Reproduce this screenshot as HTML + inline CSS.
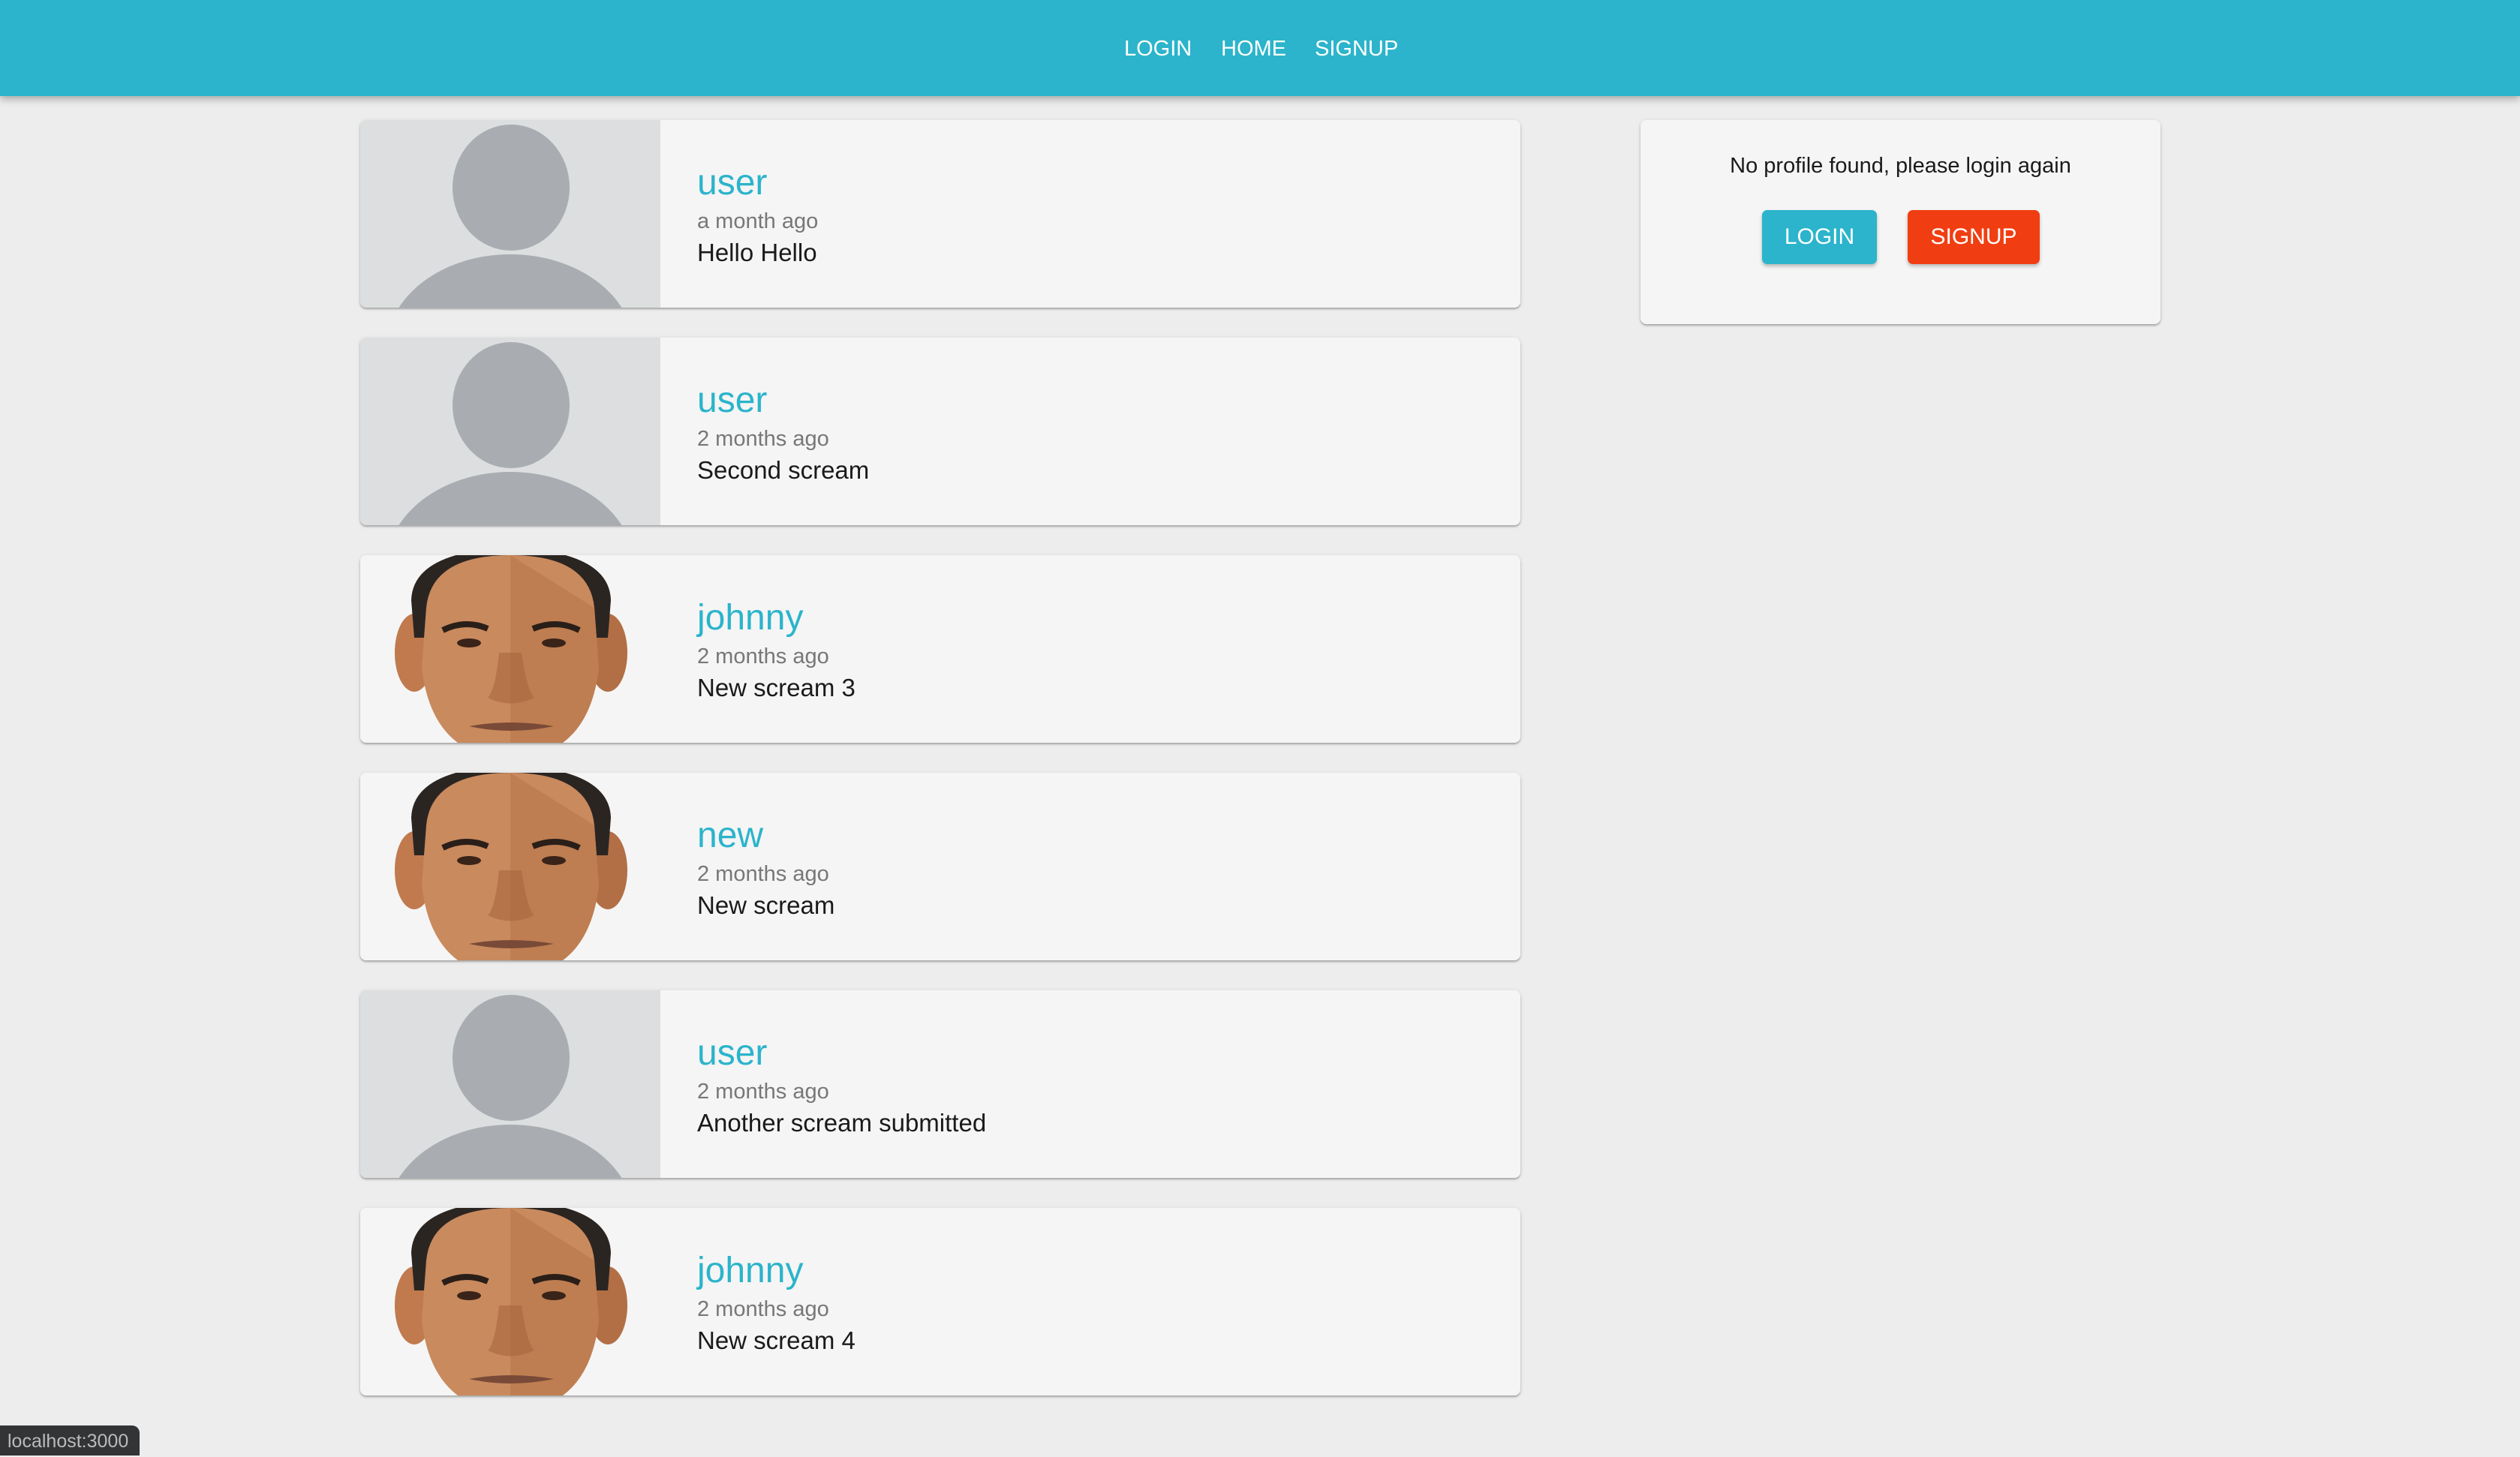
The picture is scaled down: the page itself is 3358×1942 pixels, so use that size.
<!DOCTYPE html>
<html><head><meta charset="utf-8"><style>
*{margin:0;padding:0;box-sizing:border-box}
body{width:3358px;height:1940px;background:#ededed;font-family:"Liberation Sans",Arial,sans-serif;position:relative;overflow:hidden}
.nav{position:absolute;left:0;top:0;width:3358px;height:128px;background:#2bb4cb;box-shadow:0 4px 10px rgba(0,0,0,.3);z-index:2}
.nav span{position:absolute;top:45px;color:#fff;font-size:29px;line-height:40px}
.card{position:absolute;left:480px;width:1546px;height:250px;background:#f5f5f5;border-radius:8px;box-shadow:0 2px 2px rgba(0,0,0,.25),0 1px 6px rgba(0,0,0,.1);overflow:hidden}
.card svg{position:absolute;left:0;top:0}
.t{position:absolute;left:449px;white-space:nowrap}
.n{top:59px;font-size:48px;color:#2bb4cb;line-height:50px}
.d{top:118px;font-size:29px;color:#777;line-height:34px}
.b{top:158px;font-size:33px;color:#1a1a1a;line-height:38px}
.side{position:absolute;left:2186px;top:160px;width:693px;height:272px;background:#f5f5f5;border-radius:8px;box-shadow:0 2px 2px rgba(0,0,0,.25),0 1px 6px rgba(0,0,0,.1)}
.btn{position:absolute;top:120px;height:72px;border-radius:7px;color:#fff;font-size:30px;line-height:72px;text-align:center;box-shadow:0 3px 5px rgba(0,0,0,.25)}
.tip{position:absolute;left:0;top:1900px;width:186px;height:40px;background:#333436;border-top-right-radius:10px;color:#bbb;font-size:25px;line-height:42px;padding-left:10px}
</style></head><body>
<div class="nav"><span style="left:1498px">LOGIN</span><span style="left:1627px">HOME</span><span style="left:1752px">SIGNUP</span></div>

<svg width="0" height="0" style="position:absolute"><defs>
<g id="ph"><rect width="400" height="250" fill="#dcdedf"/><ellipse cx="201" cy="90" rx="78" ry="84" fill="#a9adb1"/><ellipse cx="200" cy="305" rx="165" ry="126" fill="#a9adb1"/></g>
<g id="ob"><rect width="400" height="250" fill="#f5f5f5"/>
<ellipse cx="72" cy="130" rx="26" ry="52" fill="#c07a4e"/><ellipse cx="330" cy="130" rx="26" ry="52" fill="#b26f45"/>
<path d="M68 60 Q70 -5 200 -10 Q332 -5 334 60 L330 110 L72 110 Z" fill="#2b2522"/>
<path d="M88 70 Q95 0 200 0 Q305 0 312 70 L318 150 Q310 220 270 250 L130 250 Q90 220 82 150 Z" fill="#c98a5e"/>
<path d="M200 0 L312 70 L318 150 Q310 220 270 250 L200 250 Z" fill="#b77649" opacity=".6"/>
<path d="M110 100 Q140 85 170 98" stroke="#2a1e18" stroke-width="8" fill="none"/><path d="M230 98 Q262 85 292 100" stroke="#2a1e18" stroke-width="8" fill="none"/>
<ellipse cx="145" cy="117" rx="16" ry="6" fill="#3a2318"/><ellipse cx="258" cy="117" rx="16" ry="6" fill="#3a2318"/>
<path d="M185 130 Q180 180 170 190 Q200 205 232 190 Q222 180 215 130" fill="#a8653d" opacity=".6"/>
<path d="M145 228 Q200 218 258 228 Q200 240 145 228Z" fill="#7a4a38"/></g>
</defs></svg>

<div class="card" style="top:160px"><svg width="400" height="250"><use href="#ph"/></svg><div class="t n">user</div><div class="t d">a month ago</div><div class="t b">Hello Hello</div></div>
<div class="card" style="top:450px"><svg width="400" height="250"><use href="#ph"/></svg><div class="t n">user</div><div class="t d">2 months ago</div><div class="t b">Second scream</div></div>
<div class="card" style="top:740px"><svg width="400" height="250"><use href="#ob"/></svg><div class="t n">johnny</div><div class="t d">2 months ago</div><div class="t b">New scream 3</div></div>
<div class="card" style="top:1030px"><svg width="400" height="250"><use href="#ob"/></svg><div class="t n">new</div><div class="t d">2 months ago</div><div class="t b">New scream</div></div>
<div class="card" style="top:1320px"><svg width="400" height="250"><use href="#ph"/></svg><div class="t n">user</div><div class="t d">2 months ago</div><div class="t b">Another scream submitted</div></div>
<div class="card" style="top:1610px"><svg width="400" height="250"><use href="#ob"/></svg><div class="t n">johnny</div><div class="t d">2 months ago</div><div class="t b">New scream 4</div></div>

<div class="side">
<div style="position:absolute;left:0;width:693px;top:43px;text-align:center;font-size:29px;color:#1a1a1a;line-height:36px">No profile found, please login again</div>
<div class="btn" style="left:162px;width:153px;background:#2bb4cb">LOGIN</div>
<div class="btn" style="left:356px;width:176px;background:#f03e12">SIGNUP</div>
</div>
<div class="tip">localhost:3000</div>
</body></html>
